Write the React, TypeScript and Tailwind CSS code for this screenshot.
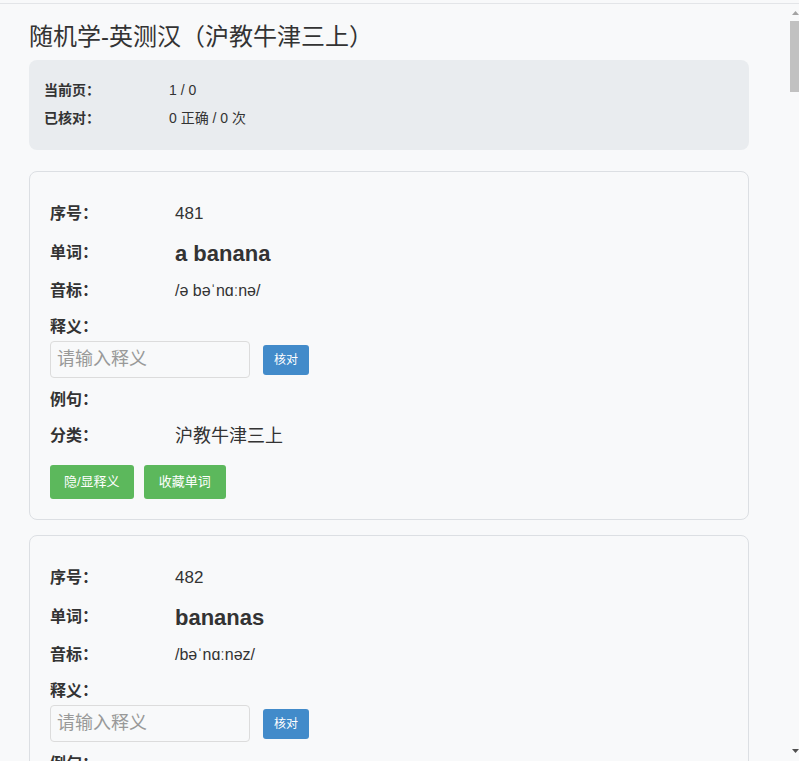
import React, { useState } from 'react';

type Word = { id: number; word: string; phonetic: string; meaning: string };

const words: Word[] = [
   { id: 481, word: 'a banana', phonetic: '/ə bəˈnɑːnə/', meaning: '一根香蕉' },
   { id: 482, word: 'bananas', phonetic: '/bəˈnɑːnəz/', meaning: '香蕉' },
];

function WordCard({ item }: { item: Word }) {
   const [value, setValue] = useState('');
   const [showMeaning, setShowMeaning] = useState(false);
   return (
      <div className="w-[720px] border border-[#dcdfe3] rounded-lg px-5 pt-[23px] pb-5 mb-[15px]">
         <div className="flex items-center h-[38px]">
            <span className="w-[125px] text-[16px] font-bold">序号：</span>
            <span className="text-[17px]">{item.id}</span>
         </div>
         <div className="flex items-center h-[40px]">
            <span className="w-[125px] text-[16px] font-bold">单词：</span>
            <span className="text-[22px] font-bold">{item.word}</span>
         </div>
         <div className="flex items-center h-[36px]">
            <span className="w-[125px] text-[16px] font-bold">音标：</span>
            <span className="text-[16px]">{item.phonetic}</span>
         </div>
         <div className="h-[32px] pt-[6px] text-[16px] font-bold leading-[24px]">释义：</div>
         <div className="flex items-center h-[37px]">
            <input
               value={value}
               onChange={(e) => setValue(e.target.value)}
               placeholder="请输入释义"
               className="w-[200px] h-[37px] border border-[#dcdcdc] rounded px-[6px] text-[18px] placeholder:text-[#999] outline-none bg-transparent"
            />
            <button className="ml-[13px] w-[46px] h-[30px] bg-[#428bca] text-white text-[12px] rounded-[3px]">
               核对
            </button>
         </div>
         <div className="flex items-center h-[38px] mt-[3px]">
            <span className="w-[125px] text-[16px] font-bold">例句：</span>
            <span className="text-[16px]">{showMeaning ? item.meaning : ''}</span>
         </div>
         <div className="flex items-center h-[34px]">
            <span className="w-[125px] text-[16px] font-bold">分类：</span>
            <span className="text-[18px]">沪教牛津三上</span>
         </div>
         <div className="flex gap-[10px] mt-[12px]">
            <button
               onClick={() => setShowMeaning(!showMeaning)}
               className="h-[34px] px-[14px] bg-[#5cb85c] text-white text-[13px] rounded-[3px]"
            >
               隐/显释义
            </button>
            <button className="h-[34px] px-[15px] bg-[#5cb85c] text-white text-[13px] rounded-[3px]">
               收藏单词
            </button>
         </div>
      </div>
   );
}

function App() {
   return (
      <div className="relative h-screen overflow-hidden bg-[#f8f9fa] text-[#333] font-['Liberation_Sans','Noto_Sans_CJK_SC',sans-serif] pt-[3px]">
         <div className="border-t border-[#e3e5e8]">
            <div className="pl-[29px]">
               <h1 className="text-[24px] font-normal leading-[36px] mt-[15px] mb-[5px]">
                  随机学-英测汉（沪教牛津三上）
               </h1>
               <div className="w-[720px] h-[90px] bg-[#e9ecef] rounded-lg px-[15px] pt-[16px] mb-[21px]">
                  <div className="flex items-center h-[28px] text-[14px]">
                     <span className="w-[125px] font-bold">当前页：</span>
                     <span>1 / 0</span>
                  </div>
                  <div className="flex items-center h-[28px] text-[14px]">
                     <span className="w-[125px] font-bold">已核对：</span>
                     <span>0 正确 / 0 次</span>
                  </div>
               </div>
               {words.map((item) => (
                  <WordCard key={item.id} item={item} />
               ))}
            </div>
         </div>
         {/* scrollbar */}
         <div className="absolute top-0 right-0 w-[10px] h-full">
            <svg className="absolute top-[11px] left-[3px]" width="7" height="5" viewBox="0 0 7 5">
               <path d="M0 4 L3.5 0 L7 4 Z" fill="#a3a3a3" />
            </svg>
            <div className="absolute top-[21px] left-[1px] w-[9px] h-[71px] bg-[#c1c1c1]" />
            <svg className="absolute bottom-[7px] left-[3px]" width="7" height="5" viewBox="0 0 7 5">
               <path d="M0 0 L7 0 L3.5 4 Z" fill="#505050" />
            </svg>
         </div>
      </div>
   );
}

export default App;
